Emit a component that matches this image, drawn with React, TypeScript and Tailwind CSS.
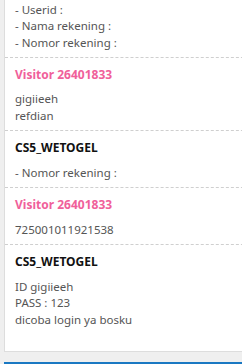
const font = { fontFamily: '"Noto Sans", "Open Sans", sans-serif' };

type Msg = { name?: string; visitor?: boolean; lines: string[] };

const messages: Msg[] = [
  { name: "Visitor 26401833", visitor: true, lines: ["gigiieeh", "refdian"] },
  { name: "CS5_WETOGEL", lines: ["- Nomor rekening :"] },
  { name: "Visitor 26401833", visitor: true, lines: ["725001011921538"] },
  { name: "CS5_WETOGEL", lines: ["ID gigiieeh", "PASS : 123", "dicoba login ya bosku"] },
];

function Block({ msg, last }: { msg: Msg; last?: boolean }) {
  return (
    <div className={`pl-[10px] pr-[10px] pt-[9px] ${last ? "pb-[23px]" : "pb-[6px] border-b border-dashed border-[#cfcfcf]"}`}>
      <div
        className={`text-[12px] font-bold leading-[16px] ${msg.visitor ? "text-[#f0609a]" : "text-[#111]"}`}
      >
        {msg.name}
      </div>
      <div className="mt-[8.5px] text-[11.5px] leading-[16.5px] text-[#555]">
        {msg.lines.map((l, i) => (
          <div key={i}>{l}</div>
        ))}
      </div>
    </div>
  );
}

export default function App() {
  return (
    <div className="w-[242px] h-[364px] overflow-hidden bg-[#efefef] pl-[4px]" style={font}>
      <div className="bg-white border-l border-b border-[#dddddd] w-[260px] overflow-hidden">
        {/* scrolled-off top message */}
        <div className="pl-[10px] pt-[1.5px] pb-[5.5px] border-b border-dashed border-[#cfcfcf] text-[11.5px] leading-[16.5px] text-[#555]">
          <div>- Userid :</div>
          <div>- Nama rekening :</div>
          <div>- Nomor rekening :</div>
        </div>
        {messages.map((m, i) => (
          <Block key={i} msg={m} last={i === messages.length - 1} />
        ))}
      </div>
      <div className="mt-[10px] h-[20px] border-t-2 border-[#1a78c2] bg-white" />
    </div>
  );
}
